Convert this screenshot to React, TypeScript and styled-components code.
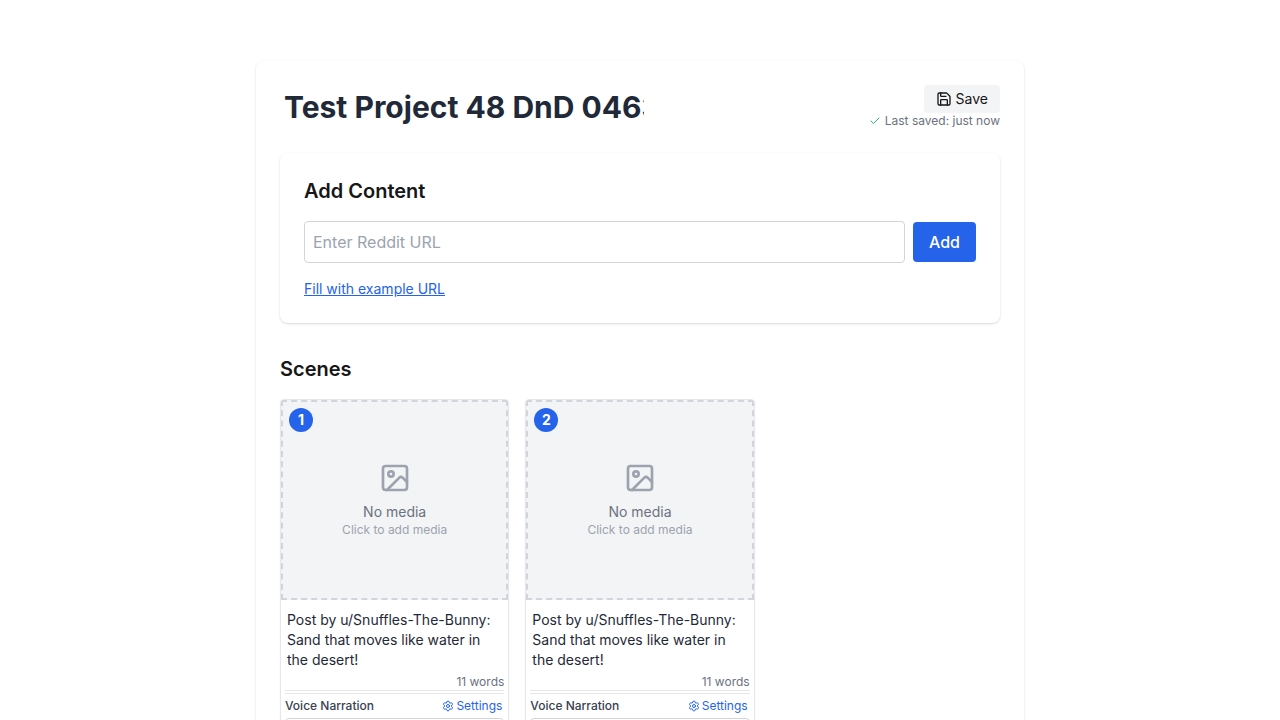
import React from "react";
import styled, { createGlobalStyle } from "styled-components";
import { Check, Image as ImageIcon, Save, Settings } from "lucide-react";

const GlobalStyle = createGlobalStyle`
  *, *::before, *::after { box-sizing: border-box; }
  html, body { margin: 0; height: 100%; overflow: hidden; }
  body {
    background: #ffffff;
    color: #171717;
    font-family: Inter, "Liberation Sans", sans-serif;
    font-size: 16px;
    line-height: 24px;
  }
  h2, p { margin: 0; }
  button, input { font: inherit; color: inherit; border: 0; margin: 0; }
  button { cursor: pointer; }
  svg { display: block; flex-shrink: 0; }
`;

const Viewport = styled.main`
  height: 720px;
  overflow: hidden;
  padding-top: 61px;
`;

const Editor = styled.div`
  width: 768px;
  height: 960px;
  margin: 0 auto;
  padding: 24px;
  border-radius: 8px;
  background: #ffffff;
  box-shadow: 0 1px 3px rgba(0, 0, 0, 0.1), 0 1px 2px rgba(0, 0, 0, 0.06);
`;

const Header = styled.header`
  display: flex;
  justify-content: space-between;
  align-items: center;
  height: 44px;
  margin-bottom: 24px;
`;

const TitleInput = styled.input`
  width: 368px;
  height: 44px;
  padding: 0 4px;
  background: transparent;
  color: #1f2937;
  font-size: 30px;
  line-height: 36px;
  font-weight: 700;
  outline: none;
`;

const SaveArea = styled.div`
  display: flex;
  flex-direction: column;
  align-items: flex-end;
`;

const SaveButton = styled.button`
  display: flex;
  align-items: center;
  gap: 4px;
  height: 28px;
  padding: 4px 12px;
  border-radius: 4px;
  background: #f3f4f6;
  font-size: 14px;
  line-height: 20px;
`;

const SaveStatus = styled.div`
  display: flex;
  align-items: center;
  gap: 4px;
  color: #6b7280;
  font-size: 12px;
  line-height: 16px;

  svg { color: #22c55e; }
`;

const ContentCard = styled.section`
  height: 170px;
  padding: 24px;
  border-radius: 8px;
  background: #ffffff;
  box-shadow: 0 1px 3px rgba(0, 0, 0, 0.1), 0 1px 2px rgba(0, 0, 0, 0.06);
  margin-bottom: 32px;
`;

const Heading = styled.h2`
  margin-bottom: 16px;
  font-size: 20px;
  line-height: 28px;
  font-weight: 600;
`;

const UrlForm = styled.div`
  display: flex;
  align-items: center;
  gap: 8px;
  margin-bottom: 16px;
`;

const UrlInput = styled.input`
  flex: 1;
  min-width: 0;
  height: 42px;
  padding: 8px;
  border: 1px solid #d1d5db;
  border-radius: 4px;
  background: #ffffff;

  &::placeholder { color: #9ca3af; opacity: 1; }
`;

const AddButton = styled.button`
  height: 40px;
  padding: 8px 16px;
  border-radius: 4px;
  background: #2563eb;
  color: #ffffff;
  font-weight: 500;
`;

const ExampleLink = styled.button`
  display: block;
  padding: 0;
  background: none;
  color: #2563eb;
  font-size: 14px;
  line-height: 20px;
  text-decoration: underline;
`;

const SceneGrid = styled.div`
  display: grid;
  grid-template-columns: repeat(3, minmax(0, 1fr));
  gap: 16px;
`;

const SceneCard = styled.article`
  height: 420px;
  border: 1px solid #e5e7eb;
  border-radius: 4px;
  background: #ffffff;
  overflow: hidden;
  box-shadow: 0 1px 2px rgba(0, 0, 0, 0.05);
`;

const Media = styled.div`
  position: relative;
  display: flex;
  flex-direction: column;
  align-items: center;
  justify-content: center;
  height: 200px;
  border: 2px dashed #d1d5db;
  background: #f3f4f6;
  color: #9ca3af;

  svg { margin-bottom: 8px; }
`;

const SceneNumber = styled.span`
  position: absolute;
  top: 6px;
  left: 6px;
  display: flex;
  align-items: center;
  justify-content: center;
  width: 24px;
  height: 24px;
  border-radius: 50%;
  background: #2563eb;
  color: #ffffff;
  font-size: 14px;
  line-height: 20px;
  font-weight: 700;
`;

const MediaTitle = styled.p`
  color: #6b7280;
  font-size: 14px;
  line-height: 20px;
`;

const MediaHint = styled.p`
  font-size: 12px;
  line-height: 16px;
`;

const SceneBody = styled.div`
  padding: 4px;
`;

const SceneText = styled.p`
  padding: 6px 2px 4px;
  color: #1f2937;
  font-size: 14px;
  line-height: 20px;
`;

const WordCount = styled.div`
  height: 17px;
  border-bottom: 1px solid #e5e7eb;
  margin-bottom: 2px;
  color: #6b7280;
  font-size: 12px;
  line-height: 16px;
  text-align: right;
`;

const VoiceRow = styled.div`
  display: flex;
  align-items: center;
  justify-content: space-between;
  height: 25px;
  padding-right: 2px;
  border-top: 1px solid #e5e7eb;
  color: #374151;
  font-size: 12px;
  line-height: 16px;
  font-weight: 500;
`;

const SettingsButton = styled.button`
  display: flex;
  align-items: center;
  gap: 2px;
  padding: 0;
  background: none;
  color: #2563eb;
  font-weight: 400;
`;

const VoiceBox = styled.div`
  height: 60px;
  border: 1px solid #d1d5db;
  border-radius: 4px;
`;

const scenes = [1, 2].map((number) => ({
  number,
  text: "Post by u/Snuffles-The-Bunny: Sand that moves like water in the desert!",
  words: 11,
}));

export default function App() {
  return (
    <>
      <GlobalStyle />
      <Viewport>
        <Editor>
          <Header>
            <TitleInput defaultValue="Test Project 48 DnD 0463" />
            <SaveArea>
              <SaveButton>
                <Save size={16} />
                Save
              </SaveButton>
              <SaveStatus>
                <Check size={12} />
                Last saved: just now
              </SaveStatus>
            </SaveArea>
          </Header>
          <ContentCard>
            <Heading>Add Content</Heading>
            <UrlForm>
              <UrlInput placeholder="Enter Reddit URL" />
              <AddButton>Add</AddButton>
            </UrlForm>
            <ExampleLink>Fill with example URL</ExampleLink>
          </ContentCard>
          <Heading>Scenes</Heading>
          <SceneGrid>
            {scenes.map((scene) => (
              <SceneCard key={scene.number}>
                <Media>
                  <SceneNumber>{scene.number}</SceneNumber>
                  <ImageIcon size={32} />
                  <MediaTitle>No media</MediaTitle>
                  <MediaHint>Click to add media</MediaHint>
                </Media>
                <SceneBody>
                  <SceneText>{scene.text}</SceneText>
                  <WordCount>{scene.words} words</WordCount>
                  <VoiceRow>
                    Voice Narration
                    <SettingsButton>
                      <Settings size={12} />
                      Settings
                    </SettingsButton>
                  </VoiceRow>
                  <VoiceBox />
                </SceneBody>
              </SceneCard>
            ))}
          </SceneGrid>
        </Editor>
      </Viewport>
    </>
  );
}
